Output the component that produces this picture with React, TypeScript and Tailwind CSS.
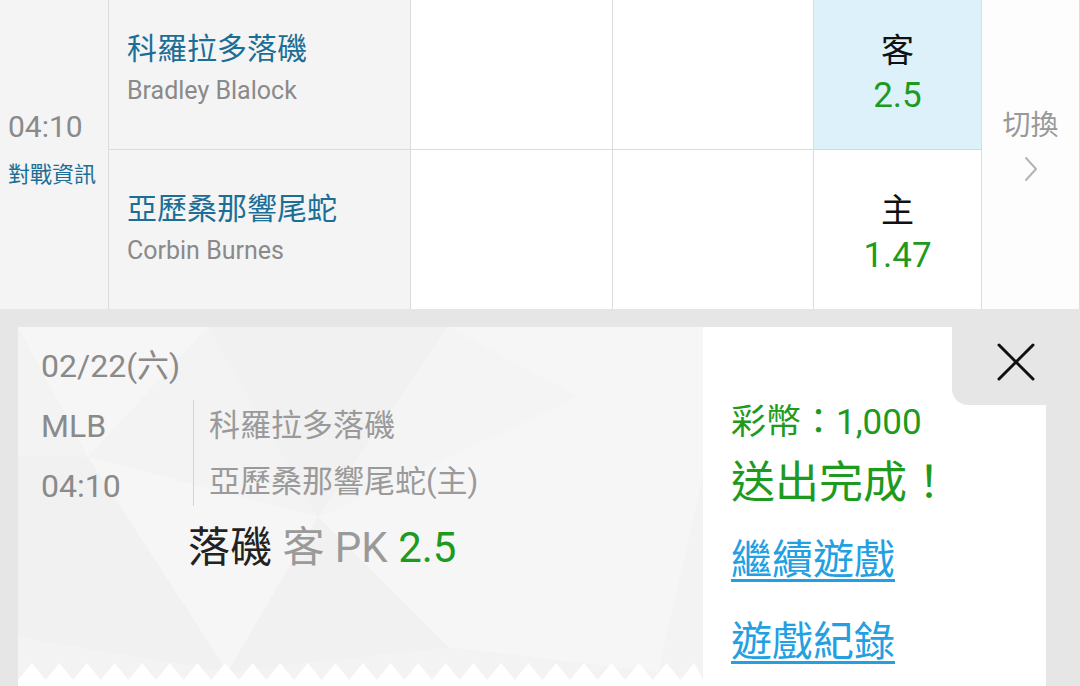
import React from "react";

const font = "font-['Roboto','Noto_Sans_CJK_TC',sans-serif]";

function Chevron() {
    return (
        <svg width="14" height="26" viewBox="0 0 14 26" fill="none">
            <polyline points="2,2 12,13 2,24" stroke="#b4b4b4" strokeWidth="2" strokeLinecap="round" strokeLinejoin="round" />
        </svg>
    );
}

function CloseIcon() {
    return (
        <svg width="40" height="40" viewBox="0 0 40 40" fill="none">
            <line x1="3" y1="3" x2="37" y2="37" stroke="#111" strokeWidth="3" strokeLinecap="round" />
            <line x1="37" y1="3" x2="3" y2="37" stroke="#111" strokeWidth="3" strokeLinecap="round" />
        </svg>
    );
}

// low-poly backdrop behind the ticket
function PolyBackdrop() {
    return (
        <svg className="absolute inset-0" width="685" height="359" viewBox="0 0 685 359">
            <rect width="685" height="359" fill="#f3f3f3" />
            <polygon points="0,0 190,0 70,130" fill="#f6f6f6" />
            <polygon points="190,0 430,0 300,190" fill="#f1f1f1" />
            <polygon points="430,0 685,0 685,150 560,70" fill="#f6f6f6" />
            <polygon points="0,130 70,130 210,345 0,310" fill="#f1f1f1" />
            <polygon points="70,130 300,190 210,345" fill="#f6f6f6" />
            <polygon points="300,190 560,70 685,150 640,345 430,320" fill="#f6f6f6" />
            <polygon points="210,345 300,190 430,320" fill="#f1f1f1" />
            <polygon points="560,70 430,0 300,190" fill="#f4f4f4" />
        </svg>
    );
}

function Zigzag() {
    const w = 685;
    const step = 27.6;
    let d = "M0,17";
    let x = 0;
    let up = true;
    while (x < w) {
        x += step / 2;
        d += ` L${Math.min(x, w).toFixed(1)},${up ? 0 : 17}`;
        up = !up;
    }
    d += ` L${w},23 L0,23 Z`;
    return (
        <svg className="absolute left-0 bottom-0" width={w} height="23" viewBox={`0 0 ${w} 23`}>
            <path d={d} fill="#ffffff" />
        </svg>
    );
}

function TeamCell({ zh, en }: { zh: string; en: string }) {
    return (
        <div className="h-[159px] flex flex-col justify-center pl-[18px]">
            <div className="text-[30px] leading-[40px] text-[#1c6e96]">{zh}</div>
            <div className="text-[25px] leading-[40px] mt-[2px] text-[#8a8a8a]">{en}</div>
        </div>
    );
}

function OddsCell({ side, odds, active }: { side: string; odds: string; active?: boolean }) {
    return (
        <div className={`h-[159px] flex flex-col items-center justify-center pt-[10px] ${active ? "bg-[#ddf1fb]" : "bg-white"}`}>
            <div className="text-[33px] leading-[42px] text-[#111]">{side}</div>
            <div className="text-[35px] leading-[48px] text-[#1e9a1e]">{odds}</div>
        </div>
    );
}

export default function App() {
    return (
        <div className={`w-[1080px] h-[686px] overflow-hidden bg-[#e6e6e6] ${font}`}>
            {/* match table */}
            <div className="flex h-[319px] -mt-[10px] bg-white">
                <div className="w-[109px] bg-[#f4f4f4] border-r border-[#dcdcdc] flex flex-col justify-center pl-[8px] pt-[2px]">
                    <div className="text-[30px] leading-[44px] text-[#8a8a8a]">04:10</div>
                    <div className="text-[22px] leading-[44px] mt-[4px] text-[#1c6e96]">對戰資訊</div>
                </div>
                <div className="w-[302px] bg-[#f4f4f4] border-r border-[#dcdcdc] flex flex-col">
                    <div className="border-b border-[#dcdcdc]">
                        <TeamCell zh="科羅拉多落磯" en="Bradley Blalock" />
                    </div>
                    <TeamCell zh="亞歷桑那響尾蛇" en="Corbin Burnes" />
                </div>
                <div className="w-[202px] border-r border-[#dcdcdc] flex flex-col">
                    <div className="h-[160px] border-b border-[#dcdcdc]" />
                </div>
                <div className="w-[201px] border-r border-[#dcdcdc] flex flex-col">
                    <div className="h-[160px] border-b border-[#dcdcdc]" />
                </div>
                <div className="w-[168px] border-r border-[#dcdcdc] flex flex-col">
                    <div className="border-b border-[#c9dde6]">
                        <OddsCell side="客" odds="2.5" active />
                    </div>
                    <OddsCell side="主" odds="1.47" />
                </div>
                <div className="flex-1 bg-[#fdfdfd] border-r border-[#dcdcdc] flex flex-col items-center justify-center pb-[12px]">
                    <div className="text-[28px] leading-[40px] text-[#999]">切換</div>
                    <div className="mt-[10px]">
                        <Chevron />
                    </div>
                </div>
            </div>

            {/* ticket result */}
            <div className="flex pt-[18px] pl-[18px] pr-[34px]">
                <div className="relative w-[685px] h-[359px]">
                    <PolyBackdrop />
                    <div className="relative pt-[9px] pl-[23px]">
                        <div className="text-[32px] leading-[60px] text-[#8a8a8a]">02/22(六)</div>
                        <div className="flex">
                            <div className="w-[152px] text-[32px] leading-[60px] text-[#8a8a8a]">
                                <div>MLB</div>
                                <div>04:10</div>
                            </div>
                            <div className="w-px h-[106px] mt-[4px] bg-[#d4d4d4]" />
                            <div className="pl-[15px] pt-[2px] text-[31px] leading-[56px] text-[#9a9a9a]">
                                <div>科羅拉多落磯</div>
                                <div>亞歷桑那響尾蛇(主)</div>
                            </div>
                        </div>
                        <div className="pl-[147px] text-[42px] leading-[64px] whitespace-nowrap">
                            <span className="text-[#222]">落磯</span>
                            <span className="text-[#9a9a9a]"> 客 PK </span>
                            <span className="text-[#1e9a1e]">2.5</span>
                        </div>
                    </div>
                    <Zigzag />
                </div>
                <div className="relative flex-1 h-[359px] bg-white pl-[28px] pt-[72px]">
                    <div className="absolute -top-[18px] -right-[34px] w-[128px] h-[96px] bg-[#e6e6e6] rounded-bl-[16px] flex items-center justify-center pt-[10px]">
                        <CloseIcon />
                    </div>
                    <div className="text-[35px] leading-[48px] text-[#1e9a1e] whitespace-nowrap">彩幣：1,000</div>
                    <div className="text-[44px] leading-[72px] text-[#1e9a1e] whitespace-nowrap">送出完成！</div>
                    <div className="h-[82px] flex items-center">
                        <a className="text-[41px] leading-[50px] text-[#22a0e2] underline decoration-[3px] underline-offset-[5px]">繼續遊戲</a>
                    </div>
                    <div className="h-[82px] flex items-center">
                        <a className="text-[41px] leading-[50px] text-[#22a0e2] underline decoration-[3px] underline-offset-[5px]">遊戲紀錄</a>
                    </div>
                </div>
            </div>
        </div>
    );
}
